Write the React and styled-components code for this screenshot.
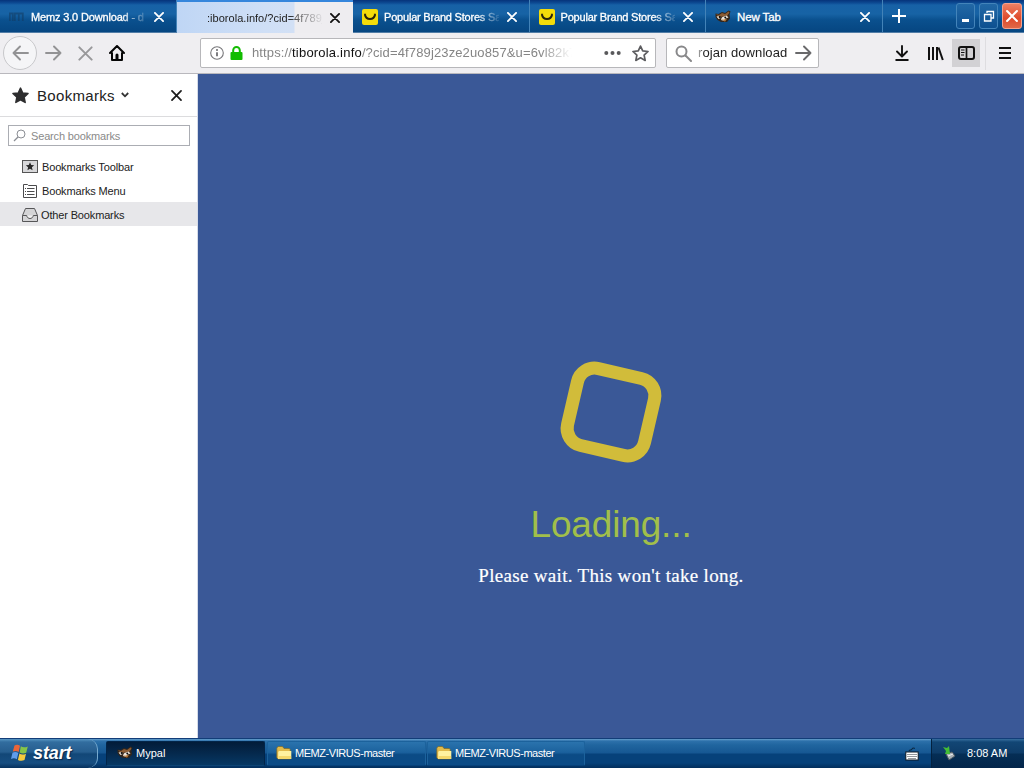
import React from 'react';
import styled, { createGlobalStyle, css } from 'styled-components';

const Global = createGlobalStyle`
  * { box-sizing: border-box; }
  body { margin: 0; font-family: "Liberation Sans", Arial, sans-serif; overflow: hidden; }
  svg { display: block; flex: none; }
`;

const Screen = styled.div`
  width: 1024px;
  height: 768px;
  display: flex;
  flex-direction: column;
  background: #fff;
`;

const TabStrip = styled.div`
  display: flex;
  height: 33px;
  flex: none;
  background: linear-gradient(#06337a 0, #0d4b94 3px, #1761a6 5px, #1763a5 14px, #0a508e 20px, #064681 32px, #9db4cc 33px);
`;

const Tab = styled.div`
  width: ${p => p.$w || 176.5}px;
  height: ${p => (p.$active ? 33 : 32)}px;
  display: flex;
  align-items: center;
  padding: 2px 12px 0 9px;
  flex: none;
  color: ${p => (p.$active ? '#222' : '#fff')};
  border-right: 1px solid ${p => (p.$active ? '#064681' : '#4383b8')};
  ${p => p.$active && css`
    border-right: 0;
    padding-right: 13px;
    background: linear-gradient(#3586dc, #3586dc) top / 100% 2px no-repeat,
      linear-gradient(90deg, #bfd6f5 0, #cfdff6 50%, #d2e0f5 117px, #eeedf0 118px);
  `}
`;

const TabIcon = styled.div`
  width: 16px;
  height: 16px;
  margin-right: ${p => p.$gap || 6}px;
  flex: none;
  opacity: ${p => (p.$faint ? 0.55 : 1)};
`;

const TabTitle = styled.div`
  flex: 1;
  min-width: 0;
  white-space: nowrap;
  font-size: ${p => p.$size || 11}px;
  line-height: 18px;
  letter-spacing: ${p => p.$ls || 0}px;
  -webkit-text-stroke: ${p => (p.$plain ? 0 : 0.3)}px currentColor;
  mask-image: ${p => (p.$fade ? `linear-gradient(90deg, #000 ${p.$fade}px, transparent 118px)` : 'none')};
`;

const CloseSlot = styled.div`
  margin-left: 8px;
  flex: none;
`;

const NewTab = styled.div`
  padding: 9px 0 0 9px;
  flex: 1;
`;

const WindowButtons = styled.div`
  display: flex;
  gap: 4px;
  padding: 3px 2px 3px 0;
`;

const WindowButton = styled.div`
  width: ${p => (p.$red ? 20 : 19)}px;
  height: 26px;
  border: 1px solid ${p => (p.$red ? '#f6a08b' : '#4384ba')};
  border-radius: 3px;
  background: ${p => (p.$red ? 'linear-gradient(#ed8064, #df4a2b 60%, #e06848)' : 'linear-gradient(#2268a6, #0d5090)')};
  display: flex;
  align-items: center;
  justify-content: center;
`;

const NavBar = styled.div`
  height: 41px;
  flex: none;
  display: flex;
  align-items: center;
  background: #efeef1;
  border-bottom: 1px solid #b9b8bd;
  padding-left: 3px;
`;

const BackButton = styled.div`
  width: 34px;
  height: 34px;
  border-radius: 50%;
  border: 1px solid #c8c8cb;
  background: #f5f5f7;
  display: grid;
  place-items: center;
`;

const NavIcon = styled.div`
  width: ${p => p.$w || 32}px;
  height: 28px;
  display: grid;
  place-items: center;
  background: ${p => (p.$pressed ? '#d2d1d4' : 'transparent')};
`;

const Field = styled.div`
  height: 30px;
  width: ${p => p.$w}px;
  margin-left: ${p => p.$left}px;
  border: 1px solid #b7b7ba;
  border-radius: 2px;
  background: #fff;
  display: flex;
  align-items: center;
  padding: 0 6px 0 ${p => p.$pad}px;
`;

const Url = styled.div`
  margin-left: 9px;
  white-space: nowrap;
  font-size: 13px;
  line-height: 20px;
  letter-spacing: 0.13px;
  color: #858585;
  mask-image: linear-gradient(90deg, #000 288px, transparent 320px);
  b { font-weight: 400; color: #111; letter-spacing: 0.2px; }
`;

const Query = styled.div`
  margin-left: 6px;
  white-space: nowrap;
  font-size: 13px;
  line-height: 20px;
  letter-spacing: 0.08px;
  color: #222;
  mask-image: linear-gradient(90deg, rgba(0, 0, 0, 0.3), #000 6px);
`;

const Tools = styled.div`
  display: flex;
  align-items: center;
  margin-left: auto;
`;

const Divider = styled.div`
  width: 1px;
  height: 33px;
  margin-left: 5px;
  background: #dedde0;
`;

const Main = styled.div`
  display: flex;
  height: 664px;
`;

const Sidebar = styled.aside`
  width: 198px;
  flex: none;
  background: #fff;
  border-right: 1px solid #d5dbe8;
`;

const SideHeader = styled.div`
  height: 43px;
  display: flex;
  align-items: center;
  padding: 0 15px 0 12px;
  border-bottom: 1px solid #dcdcde;
`;

const SideTitle = styled.div`
  font-size: 15px;
  line-height: 20px;
  letter-spacing: 0.32px;
  color: #222;
  margin: 2px 6px 0 8px;
`;

const Spacer = styled.div`
  flex: 1;
`;

const SideSearch = styled.div`
  height: 21px;
  margin: 8px 7px 8px 8px;
  border: 1px solid #abadb3;
  display: flex;
  align-items: center;
  gap: 5px;
  padding-left: 4px;
  font-size: 11px;
  letter-spacing: -0.16px;
  color: #8a8a8a;
`;

const Folder = styled.div`
  height: 24px;
  display: flex;
  align-items: center;
  gap: ${p => (p.$selected ? 3 : 4)}px;
  padding: 1px 0 0 22px;
  font-size: 11px;
  letter-spacing: -0.15px;
  color: #222;
  background: ${p => (p.$selected ? '#e7e7ea' : 'transparent')};
`;

const Page = styled.main`
  flex: 1;
  background: #3a5897;
  display: flex;
  flex-direction: column;
  align-items: center;
  padding-top: 292px;
`;

const Spinner = styled.div`
  width: 92px;
  height: 92px;
  border: 13px solid #d1bc3a;
  border-radius: 24px;
  transform: rotate(13deg);
`;

const Loading = styled.div`
  margin-top: 43px;
  font-size: 37px;
  line-height: 48px;
  color: #a1bf4a;
  letter-spacing: -0.15px;
`;

const Wait = styled.div`
  margin-top: 15px;
  font-family: "Liberation Serif", "Times New Roman", serif;
  font-size: 19px;
  line-height: 24px;
  letter-spacing: 0.31px;
  color: #fff;
  -webkit-text-stroke: 0.2px #fff;
`;

const Taskbar = styled.footer`
  height: 30px;
  display: flex;
  color: #fff;
  border-top: 1px solid #123d78;
  background: linear-gradient(#66a0cc 0, #2d71ab 2px, #20659f 6px, #165793 14px, #06417a 15px, #06417a 24px, #022e5c 29px);
`;

const Start = styled.div`
  width: 98px;
  display: flex;
  align-items: center;
  padding: 0 0 1px 11px;
  gap: 4px;
  border-right: 1px solid #76a9cf;
  border-radius: 0 10px 10px 0;
  background: linear-gradient(#5796c3 0, #326d9f 3px, #265d8e 13px, #124777 15px, #174e81 24px, #06315d 29px);
  font: italic bold 18px/24px "Liberation Sans", Arial, sans-serif;
  letter-spacing: -0.1px;
  text-shadow: 1px 1px 1px #06264d;
`;

const Task = styled.div`
  width: ${p => p.$w}px;
  margin: 2px 0 2px ${p => p.$left || 0}px;
  display: flex;
  align-items: center;
  gap: 3px;
  padding: 0 0 2px ${p => (p.$active ? 10 : 8)}px;
  border: 1px solid ${p => (p.$active ? '#022549' : '#1c629c')};
  border-bottom-color: ${p => (p.$active ? '#0d4474' : '#06417a')};
  border-radius: 2px;
  background: ${p => (p.$active
    ? 'linear-gradient(#021c39, #05294d 50%, #063864)'
    : 'linear-gradient(#2a73ad, #1b619d 45%, #0b4b85 55%, #0b4b86)')};
  font-size: 11px;
  letter-spacing: ${p => p.$ls || 0}px;
`;

const Tray = styled.div`
  width: 93px;
  margin-left: 12px;
  border-left: 1px solid #03213f;
  background: linear-gradient(#376f9f 0, #124675 3px, #0e3c68 14px, #052e55 15px, #03254a 29px);
  display: flex;
  align-items: center;
  gap: 10px;
  padding: 0 0 2px 10px;
  font-size: 11px;
  letter-spacing: 0;
`;

const KeyboardSlot = styled.div`
  margin-left: auto;
  display: flex;
  align-items: center;
`;

const Cross = ({ size = 10, color = '#fff', width = 1.8 }) => (
  <svg width={size} height={size} viewBox="0 0 10 10" stroke={color} strokeWidth={width} strokeLinecap="round">
    <path d="M.9.9l8.2 8.2M9.1.9L.9 9.1" />
  </svg>
);

const Bag = () => (
  <svg width="16" height="16" viewBox="0 0 16 16">
    <rect width="16" height="16" rx="2" fill="#f4dc0a" />
    <path d="M2.2 5h2M11.8 5h2" stroke="#ad9707" strokeWidth="1" />
    <path d="M3 5.7c1 5.6 9 5.6 10 0" fill="none" stroke="#28230b" strokeWidth="2" strokeLinecap="round" />
  </svg>
);

const Animal = () => (
  <svg width="16" height="16" viewBox="0 0 16 16">
    <path d="M.5 4.5l3 .5L7 3l3 1 3.5-2.5 2 1-1 3 .5 4-3 3.5H6L2.5 11 .5 8z" fill="#33261b" />
    <path d="M1 5l3 1 3-2 3 1 3.5-2.5 1 1-2 3L8 7.5 4 8z" fill="#8c5d34" />
    <path d="M1.5 7.5l3-.6 1 2-2 1zM7.5 8l4-1.6 2 2-3 1-1 2.5L6 11l.5-2z" fill="#f0e8dc" />
    <path d="M5 9.2l3 1.5 4-1-2 3z" fill="#b77a3b" />
    <circle cx="4.6" cy="8" r="1" fill="#08090a" /><circle cx="10.3" cy="8.6" r="1" fill="#08090a" />
  </svg>
);

const MemzIcon = () => (
  <svg width="16" height="16" viewBox="0 0 16 16" fill="none" stroke="#123b61" strokeWidth="1.8">
    <path d="M.8 12V4.5h3V12M5.8 12V4.5h4V12M9.8 4.5h4V12" />
  </svg>
);

const Arrow = ({ flip, color = '#929294' }) => (
  <svg width="17" height="16" viewBox="0 0 17 16" fill="none" stroke={color} strokeWidth="1.9" strokeLinecap="round" strokeLinejoin="round">
    <path d={flip ? 'M16 8H1.5M8 1.5L1.5 8 8 14.5' : 'M1 8h14.5M9 1.5L15.5 8 9 14.5'} />
  </svg>
);

const Home = () => (
  <svg width="16" height="16" viewBox="0 0 16 16" fill="none" stroke="#060606" strokeWidth="2" strokeLinejoin="round" strokeLinecap="round">
    <path d="M1 8l7-7 7 7M3 8v7h10V8" /><path d="M8 14v-4" strokeWidth="3" />
  </svg>
);

const Info = () => (
  <svg width="14" height="14" viewBox="0 0 14 14">
    <circle cx="7" cy="7" r="6.3" fill="none" stroke="#77777a" strokeWidth="1.1" />
    <path d="M7 6.2v4" stroke="#66666a" strokeWidth="1.7" /><circle cx="7" cy="4" r="1" fill="#66666a" />
  </svg>
);

const LockIcon = styled.svg`
  margin-left: 6px;
`;

const Lock = () => (
  <LockIcon width="13" height="14" viewBox="0 0 13 14">
    <rect x=".5" y="6" width="12" height="8" rx="1" fill="#12bc00" />
    <path d="M3.2 7V4.3a3.3 3.3 0 016.6 0V7" fill="none" stroke="#12bc00" strokeWidth="2" />
  </LockIcon>
);

const STAR = 'M8 1l2.1 4.6 5 .5-3.7 3.4 1 5L8 12l-4.4 2.5 1-5L.9 6.1l5-.5z';
const Star = ({ filled }) => (
  <svg width="17" height="17" viewBox="0 0 16 16" fill={filled ? '#2d2d2e' : 'none'} stroke={filled ? '#2d2d2e' : '#5c5c5f'} strokeWidth={filled ? 1.4 : 1.6} strokeLinejoin="round">
    <path d={STAR} />
  </svg>
);

const Lens = ({ small }) => small ? (
  <svg width="13" height="13" viewBox="0 0 13 13" fill="none" stroke="#8b8e94" strokeWidth="1">
    <circle cx="8" cy="5" r="4" /><path d="M5 8L1 12" strokeWidth="1.2" />
  </svg>
) : (
  <svg width="17" height="17" viewBox="0 0 17 17" fill="none" stroke="#88888a" strokeWidth="2" strokeLinecap="round">
    <circle cx="6.5" cy="6.5" r="5" /><path d="M10.5 10.5L16 16" />
  </svg>
);

const Windows = () => (
  <svg width="18" height="18" viewBox="0 0 18 18">
    <path d="M3.5 1.4c2-1 3.9-.8 5.5.3L7.6 8C5.8 6.8 4 6.7 1.8 7.6z" fill="#ed6537" />
    <path d="M9.8 2.3c2 1.3 4.4 1.3 7 .1L15.2 8.7c-2 1-4.4 1-6.5-.1z" fill="#86c548" />
    <path d="M1.5 8.7c2-1 4-.8 5.8.4l-1.5 6.1c-1.7-1.2-3.6-1.3-5.8-.3z" fill="#609dea" />
    <path d="M8.4 9.6c2.1 1.3 4.3 1.2 6.6.1l-1.5 6.3c-2.1 1-4.4 1-6.6-.1z" fill="#f8cb3d" />
  </svg>
);

const FolderIcon = () => (
  <svg width="16" height="16" viewBox="0 0 16 16">
    <path d="M.8 4.5V3l1.3-1.5h4.4l1.5 2h5.2l1 1V14H2L.8 12.5z" fill="#e2bb4b" stroke="#7d6828" strokeWidth=".7" />
    <path d="M3 6h12.3v8H2.2V7z" fill="#fff2a0" /><path d="M2.5 11h12.6v3H2.5z" fill="#f5d96c" />
  </svg>
);

const tasks = [{ left: 2, w: 159 }, { left: 1, w: 158 }];

export default function App() {
  return (
    <Screen>
      <Global />
      <TabStrip>
        <Tab $w={177}>
          <TabIcon $faint><MemzIcon /></TabIcon>
          <TabTitle $fade={90} $ls={-0.16}>Memz 3.0 Download - d</TabTitle>
          <CloseSlot><Cross /></CloseSlot>
        </Tab>
        <Tab $active $w={176}>
          <TabIcon $gap={5} />
          <TabTitle $plain $fade={80} $ls={0.03}>:iborola.info/?cid=4f789j</TabTitle>
          <CloseSlot><Cross color="#111" /></CloseSlot>
        </Tab>
        {[0, 1].map(i => (
          <Tab key={i}>
            <TabIcon $gap={6}><Bag /></TabIcon>
            <TabTitle $fade={92} $ls={-0.2}>Popular Brand Stores Sa</TabTitle>
            <CloseSlot><Cross /></CloseSlot>
          </Tab>
        ))}
        <Tab>
          <TabIcon><Animal /></TabIcon>
          <TabTitle $size={11.5} $ls={-0.1}>New Tab</TabTitle>
          <CloseSlot><Cross /></CloseSlot>
        </Tab>
        <NewTab>
          <svg width="14" height="14" viewBox="0 0 14 14" stroke="#fff" strokeWidth="2"><path d="M7 0v14M0 7h14" /></svg>
        </NewTab>
        <WindowButtons>
          <WindowButton>
            <svg width="14" height="16" viewBox="0 0 14 16"><path d="M3 11h7v3H3z" fill="#fff" /></svg>
          </WindowButton>
          <WindowButton>
            <svg width="12" height="12" viewBox="0 0 12 12" fill="none" stroke="#fff" strokeWidth="1.3"><path d="M4 3V1.5h6.5V8H8M1.5 4.5H8V11H1.5z" /></svg>
          </WindowButton>
          <WindowButton $red><Cross size={12} width={1.7} /></WindowButton>
        </WindowButtons>
      </TabStrip>

      <NavBar>
        <BackButton><Arrow flip /></BackButton>
        <NavIcon><Arrow /></NavIcon>
        <NavIcon><Cross size={15} color="#98989a" width={1.3} /></NavIcon>
        <NavIcon><Home /></NavIcon>
        <Field $w={456} $left={67} $pad={9}>
          <Info />
          <Lock />
          <Url>https://<b>tiborola.info</b>/?cid=4f789j23ze2uo857&amp;u=6vl82k7</Url>
          <Spacer />
          <svg width="17" height="6" viewBox="0 0 17 6" fill="#59595b"><circle cx="2.3" cy="3" r="2" /><circle cx="8.5" cy="3" r="2" /><circle cx="14.7" cy="3" r="2" /></svg>
          <NavIcon $w={11} />
          <Star />
        </Field>
        <Field $w={153} $left={10} $pad={8}>
          <Lens />
          <Query>rojan download</Query>
          <Spacer />
          <Arrow color="#69696b" />
        </Field>
        <Tools>
          <NavIcon>
            <svg width="14" height="16" viewBox="0 0 14 16" fill="none" stroke="#111" strokeWidth="1.9" strokeLinecap="round" strokeLinejoin="round"><path d="M7 1v10M2 6.5L7 11.5l5-5M1.2 15h11.6" /></svg>
          </NavIcon>
          <NavIcon $w={34}>
            <svg width="17" height="15" viewBox="0 0 17 15" fill="none" stroke="#111" strokeWidth="2"><path d="M2 1v13M6 1v13M10 1v13" /><path d="M11.5 1.5L15.8 14" /></svg>
          </NavIcon>
          <NavIcon $w={28} $pressed>
            <svg width="17" height="14" viewBox="0 0 17 14" fill="none" stroke="#111"><rect x="1" y="1" width="15" height="12" rx="2" strokeWidth="2" /><path d="M8.5 1v12" strokeWidth="1.7" /><path d="M3 4h3.5M3 6.5h3.5M3 9h3" /></svg>
          </NavIcon>
          <Divider />
          <NavIcon $w={38}>
            <svg width="12" height="12" viewBox="0 0 12 12" stroke="#111" strokeWidth="2"><path d="M0 1h12M0 6h12M0 11h12" /></svg>
          </NavIcon>
        </Tools>
      </NavBar>

      <Main>
        <Sidebar>
          <SideHeader>
            <Star filled />
            <SideTitle>Bookmarks</SideTitle>
            <svg width="8" height="6" viewBox="0 0 8 6" fill="none" stroke="#333" strokeWidth="1.8"><path d="M.8 1L4 4.3 7.2 1" /></svg>
            <Spacer />
            <Cross size={11} color="#1d1d1d" width={1.6} />
          </SideHeader>
          <SideSearch><Lens small />Search bookmarks</SideSearch>
          <Folder>
            <svg width="16" height="14" viewBox="0 0 16 14"><rect x=".5" y=".5" width="15" height="12" fill="#d8d8da" stroke="#555" /><path d="M8 2.3l1.2 2.8 3 .2-2.3 2 .7 3L8 8.8l-2.6 1.5.7-3-2.3-2 3-.2z" fill="#282828" /></svg>
            Bookmarks Toolbar
          </Folder>
          <Folder>
            <svg width="16" height="14" viewBox="0 0 16 14" fill="none" stroke="#4b4b4d"><path d="M1.5 .5h4l1 1h8v12h-13z" /><path d="M3 4.5h1M5 4.5h7.5M3 7.5h1M5 7.5h7.5M3 10.5h1M5 10.5h7.5" /></svg>
            Bookmarks Menu
          </Folder>
          <Folder $selected>
            <svg width="16" height="14" viewBox="0 0 16 14" fill="#d4d4d6" stroke="#565658"><path d="M3.5 .5h9l3 7v6H.5v-6z" /><path d="M.5 7.5h4.2c.5 4 6.1 4 6.6 0h4.2" fill="#f0f0f1" /></svg>
            Other Bookmarks
          </Folder>
        </Sidebar>
        <Page>
          <Spinner />
          <Loading>Loading...</Loading>
          <Wait>Please wait. This won't take long.</Wait>
        </Page>
      </Main>

      <Taskbar>
        <Start><Windows />start</Start>
        <Task $active $w={159} $left={8}><Animal />Mypal</Task>
        {tasks.map((t, i) => (
          <Task key={i} $w={t.w} $left={t.left} $ls={-0.45}><FolderIcon />MEMZ-VIRUS-master</Task>
        ))}
        <KeyboardSlot>
          <svg width="14" height="14" viewBox="0 0 14 14"><path d="M4 4c0-2 3 0 3-2s3 0 3-1" fill="none" stroke="#061c31" /><rect x=".8" y="5" width="12.4" height="8" fill="#fff" stroke="#0b1722" strokeWidth="1" /><path d="M2.5 7.5h9M2.5 9.5h9M3.5 11.5h7" stroke="#28313a" strokeDasharray="1 1" /></svg>
        </KeyboardSlot>
        <Tray>
          <svg width="15" height="16" viewBox="0 0 15 16"><path d="M4 9l6-2 3 4-6 4z" fill="#a9b1b7" stroke="#4b5963" /><path d="M6 11l5-2" stroke="#eef2f4" /><path d="M1 2l4 1 2-2 1 8-5 0 1-3z" fill="#43bd36" /></svg>
          8:08 AM
        </Tray>
      </Taskbar>
    </Screen>
  );
}
